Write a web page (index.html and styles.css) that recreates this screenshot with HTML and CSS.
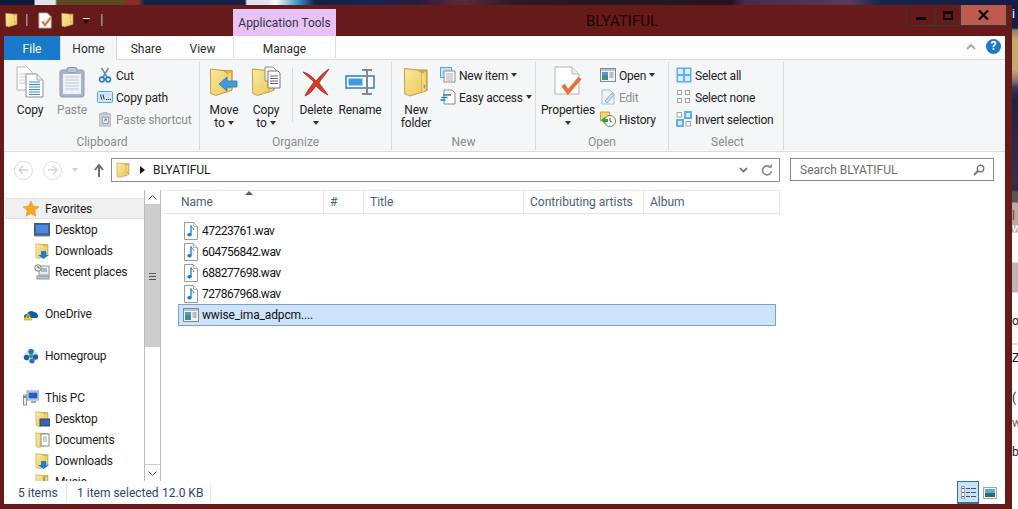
FILE: index.html
```html
<!DOCTYPE html>
<html lang="en">
<head>
<meta charset="utf-8">
<title>BLYATIFUL</title>
<link rel="stylesheet" href="styles.css">
</head>
<body>
<svg class="defs" width="0" height="0" aria-hidden="true">
  <defs>
    <linearGradient id="fy" x1="0" y1="0" x2="1" y2="1">
      <stop offset="0" stop-color="#f9e9a0"/>
      <stop offset="1" stop-color="#eec95c"/>
    </linearGradient>
  </defs>
  <symbol id="folder" viewBox="0 0 28 32">
    <path d="M9 3h17v22l-5 2H9z" fill="#d8b24e" stroke="#b8973f" stroke-width="1"/>
    <path d="M1.500 1.500l14 1.500 5 3v21l-13 4-5.500-2z" fill="url(#fy)" stroke="#b8973f" stroke-width="1"/>
    <path d="M20.500 7l4-2v20l-4 2z" fill="#f3d97c"/>
    <path d="M23 19v4" stroke="#4a9ad8" stroke-width="1.200"/>
  </symbol>
  <symbol id="note" viewBox="0 0 14 18">
    <path d="M.5.500h9l4 4v13H.5z" fill="#fff" stroke="#9a9a9a"/>
    <path d="M9.500.500v4h4" fill="#eee" stroke="#b0b0b0"/>
    <path d="M7 3.500v9" stroke="#1a7fd0" stroke-width="1.300" fill="none"/>
    <path d="M7 3.500c.5 2 2.500 2.500 3 4.500" stroke="#1a7fd0" fill="none"/>
    <ellipse cx="5.500" cy="12.800" rx="2.300" ry="1.800" fill="#1a7fd0"/>
  </symbol>
  <symbol id="appwin" viewBox="0 0 16 14">
    <rect x=".5" y=".5" width="15" height="13" fill="#f2f2f2" stroke="#7f8a8f"/>
    <rect x="1" y="1" width="14" height="2" fill="#b9c3c9"/>
    <rect x="2" y="4" width="6" height="8" fill="#3f8f7f"/>
    <rect x="2" y="4" width="6" height="3" fill="#5a93c9"/>
    <path d="M9.500 5h4M9.500 7h4M9.500 9h4" stroke="#7c8a92"/>
  </symbol>
  <symbol id="selectall" viewBox="0 0 16 16">
    <rect x=".5" y=".5" width="15" height="15" fill="#60adf2"/>
    <rect x="2" y="2" width="5" height="5" fill="#d8ecfc"/><rect x="9" y="2" width="5" height="5" fill="#d8ecfc"/>
    <rect x="2" y="9" width="5" height="5" fill="#d8ecfc"/><rect x="9" y="9" width="5" height="5" fill="#d8ecfc"/>
  </symbol>
</svg>

<div class="window">
  <header class="titlebar">
    <div class="quick">
      <svg class="q-folder"><use href="#folder"/></svg>
      <span class="q-sep"></span>
      <svg class="q-doc" viewBox="0 0 16 18">
        <path d="M1 1h9l4 4v12H1z" fill="#fff" stroke="#aaa"/>
        <path d="M4.500 10l3 4 6-8" fill="none" stroke="#e2733f" stroke-width="2.400"/>
      </svg>
      <svg class="q-folder q-folder2"><use href="#folder"/></svg>
      <span class="q-drop"></span>
      <span class="q-sep q-sep2"></span>
    </div>
    <div class="app-tools">Application Tools</div>
    <div class="title">BLYATIFUL</div>
    <div class="controls">
      <span class="ctl ctl-min"><i></i></span>
      <span class="ctl ctl-max"><i></i></span>
      <span class="ctl ctl-close">
        <svg width="11" height="10" viewBox="0 0 11 10"><path d="M1 .5l9 9M10 .5l-9 9" stroke="#0a0a0a" stroke-width="2.400"/></svg>
      </span>
    </div>
  </header>

  <div class="frame">
    <nav class="tabs">
      <span class="tab tab-file">File</span>
      <span class="tab tab-home">Home</span>
      <span class="tab tab-share">Share</span>
      <span class="tab tab-view">View</span>
      <span class="tab tab-manage">Manage</span>
      <span class="tab-tools">
        <svg width="10" height="7" viewBox="0 0 10 7"><path d="M1 6l4-4 4 4" fill="none" stroke="#a8a8a8" stroke-width="2"/></svg>
        <span class="help">?</span>
      </span>
    </nav>

    <section class="ribbon">
      <div class="group g-clip">
        <div class="group-body">
          <div class="big w42">
            <svg class="ico" width="28" height="32" viewBox="0 0 28 32">
              <path d="M1 1h10l5 5v18H1z" fill="#fff" stroke="#b5b5b5"/>
              <path d="M3 8h9M3 11h9M3 14h9M3 17h9" stroke="#c9c9c9"/>
              <path d="M10 8h11l6 6v17H10z" fill="#fff" stroke="#8f8f8f"/>
              <path d="M21 8v6h6" fill="#eee" stroke="#aaa"/>
              <path d="M13 16h11M13 18.500h11M13 21h11M13 23.500h11M13 26h11M13 28.500h11" stroke="#3a8ad6"/>
            </svg>
            <span>Copy</span>
          </div>
          <div class="big w42 dim">
            <svg class="ico" width="26" height="32" viewBox="0 0 26 32">
              <rect x="1" y="4" width="24" height="27" rx="2" fill="#a9b6c6" stroke="#8f9db0"/>
              <rect x="4" y="8" width="18" height="20" fill="#eef1f5"/>
              <path d="M6 11h14M6 14h14M6 17h14M6 20h14M6 23h14" stroke="#c3ccd8"/>
              <rect x="8" y="1.500" width="10" height="5" rx="1.500" fill="#b8c3d0" stroke="#8f9db0"/>
            </svg>
            <span>Paste</span>
          </div>
          <div class="smalls s-clip">
            <div class="small"><svg class="si" viewBox="0 0 16 18"><path d="M4 1l6 10M12 1L6 11" stroke="#7b8794" stroke-width="1.800"/><circle cx="4.500" cy="14" r="2.600" fill="none" stroke="#1a7fd0" stroke-width="1.800"/><circle cx="11.500" cy="14" r="2.600" fill="none" stroke="#1a7fd0" stroke-width="1.800"/></svg><span>Cut</span></div>
            <div class="small"><svg class="si" viewBox="0 0 16 14"><rect x=".5" y="1.500" width="15" height="11" rx="1" fill="#cfe6fb" stroke="#5aa6ea"/><path d="M3.500 4.500l1.200 5M6 4.500l1.200 5" stroke="#222" stroke-width=".9"/><path d="M9 9.500h1M11 9.500h1M13 9.500h1" stroke="#222"/></svg><span>Copy path</span></div>
            <div class="small dim"><svg class="si" viewBox="0 0 16 18"><rect x="2" y="3" width="12" height="14" fill="#c9d2dc" stroke="#a9b5c2"/><rect x="5" y="1" width="6" height="3" fill="#b3bec9"/><rect x="5" y="7" width="7" height="7" fill="#eef1f5" stroke="#8e99a6"/><path d="M6.500 12l3-3M7.500 9h2v2" stroke="#5d6975" fill="none"/></svg><span>Paste shortcut</span></div>
          </div>
        </div>
        <div class="group-label">Clipboard</div>
      </div>

      <div class="group g-org">
        <div class="group-body">
          <div class="big w40">
            <svg class="ico" width="30" height="32" viewBox="0 0 30 32">
              <use href="#folder" width="25" height="32"/>
              <path d="M10 18l8-7v4h10v6H18v4z" fill="#3f9be0" stroke="#2477b8" stroke-width=".8"/>
            </svg>
            <span>Move<br>to<i class="caret"></i></span>
          </div>
          <div class="big w40 m2">
            <svg class="ico" width="30" height="32" viewBox="0 0 30 32">
              <use href="#folder" width="25" height="32"/>
              <path d="M14 1h8l4 4v10H14z" fill="#f4f4f4" stroke="#8f8f8f"/>
              <path d="M17 5h10l2 2v15H17z" fill="#fff" stroke="#777"/>
              <path d="M19 10h8M19 12.500h8M19 15h8M19 17.500h8" stroke="#667"/>
            </svg>
            <span>Copy<br>to<i class="caret"></i></span>
          </div>
          <span class="inner-sep"></span>
          <div class="big w40">
            <svg class="ico" width="30" height="30" viewBox="0 0 30 30">
              <path d="M2 5c7 2 10 6 13 9 4-5 8-9 13-12-3 5-8 10-10 14 3 4 6 8 9 12-5-2-9-6-12-9-3 4-6 8-11 10 2-5 6-10 9-14C10 12 6 9 2 5z" fill="#d63a2b" stroke="#a92a20" stroke-width=".8"/>
            </svg>
            <span>Delete<br><i class="caret solo"></i></span>
          </div>
          <div class="big w44 m2">
            <svg class="ico" width="30" height="30" viewBox="0 0 30 30">
              <rect x="1" y="9" width="28" height="12" fill="#fff" stroke="#2a7fc8" stroke-width="1.500"/>
              <rect x="3.500" y="11.500" width="14" height="7" fill="#3f9be0"/>
              <path d="M17 3h10M17 27h10M22 3v24" stroke="#808890" stroke-width="2"/>
            </svg>
            <span>Rename</span>
          </div>
        </div>
        <div class="group-label">Organize</div>
      </div>

      <div class="group g-new">
        <div class="group-body">
          <div class="big w40">
            <svg class="ico" width="26" height="32"><use href="#folder"/></svg>
            <span>New<br>folder</span>
          </div>
          <div class="smalls">
            <div class="small"><svg class="si" viewBox="0 0 16 16"><rect x=".5" y=".5" width="11" height="10" fill="#bfe0fa" stroke="#5aa6ea"/><path d="M4 4h11v11H4z" fill="#fff" stroke="#8a8a8a"/><path d="M6 7h7M6 9h7M6 11h7M6 13h7" stroke="#aaa"/></svg><span>New item</span><i class="caret"></i></div>
            <div class="small"><svg class="si" viewBox="0 0 16 16"><path d="M4 1h8l3 3v11H4z" fill="#fff" stroke="#8a8a8a"/><path d="M3 6h8M1.500 8.500h6M.5 11h5" stroke="#1a7fd0" stroke-width="1.300"/></svg><span>Easy access</span><i class="caret"></i></div>
          </div>
        </div>
        <div class="group-label">New</div>
      </div>

      <div class="group g-open">
        <div class="group-body">
          <div class="big w56">
            <svg class="ico" width="28" height="32" viewBox="0 0 28 32">
              <path d="M1 1h17l7 7v20H1z" fill="#fff" stroke="#b0b0b0"/>
              <path d="M18 1v7h7" fill="#eee" stroke="#bbb"/>
              <path d="M9 19l5 7 12-14" fill="none" stroke="#e2733f" stroke-width="4"/>
            </svg>
            <span>Properties<br><i class="caret solo"></i></span>
          </div>
          <div class="smalls">
            <div class="small"><svg class="si" viewBox="0 0 16 14"><use href="#appwin"/></svg><span>Open</span><i class="caret"></i></div>
            <div class="small dim"><svg class="si" viewBox="0 0 16 16"><path d="M2 1h8l4 4v10H2z" fill="#eef3fa" stroke="#a9bedb"/><path d="M5 12l7-8 2 2-7 8z" fill="#cfdcee" stroke="#8faacf"/></svg><span>Edit</span></div>
            <div class="small"><svg class="si" viewBox="0 0 16 16"><path d="M.5 1h9v9h-9z" fill="#f0d470" stroke="#c8a448"/><circle cx="10" cy="10" r="5.500" fill="#fff" stroke="#777"/><path d="M10 7v3l2 1" stroke="#555" fill="none"/><path d="M1 9l4-3v2h3v3H5v2z" fill="#2ea32e"/></svg><span>History</span></div>
          </div>
        </div>
        <div class="group-label">Open</div>
      </div>

      <div class="group g-sel">
        <div class="group-body">
          <div class="smalls s-sel">
            <div class="small"><svg class="si"><use href="#selectall"/></svg><span>Select all</span></div>
            <div class="small"><svg class="si" viewBox="0 0 16 16"><g fill="#fff" stroke="#a3a3a3"><rect x="1.500" y="1.500" width="4" height="4"/><rect x="9.500" y="1.500" width="4" height="4"/><rect x="1.500" y="9.500" width="4" height="4"/><rect x="9.500" y="9.500" width="4" height="4"/></g></svg><span>Select none</span></div>
            <div class="small"><svg class="si" viewBox="0 0 16 16"><rect x="1" y="1.500" width="4.500" height="4.500" fill="#fff" stroke="#a3a3a3"/><rect x="8" y="0" width="8" height="8" fill="#60adf2"/><rect x="10" y="2" width="4" height="4" fill="#d8ecfc"/><rect x="0" y="8" width="8" height="8" fill="#60adf2"/><rect x="2" y="10" width="4" height="4" fill="#d8ecfc"/><rect x="10" y="10.500" width="4.500" height="4.500" fill="#fff" stroke="#a3a3a3"/></svg><span>Invert selection</span></div>
          </div>
        </div>
        <div class="group-label">Select</div>
      </div>
    </section>

    <div class="addressrow">
      <div class="navbtns">
        <span class="circle"><svg width="11" height="10" viewBox="0 0 11 10"><path d="M5 1L1 5l4 4M1 5h9" fill="none" stroke="#d2d2d2" stroke-width="1.300"/></svg></span>
        <span class="circle"><svg width="11" height="10" viewBox="0 0 11 10"><path d="M6 1l4 4-4 4M10 5H1" fill="none" stroke="#d2d2d2" stroke-width="1.300"/></svg></span>
        <i class="navdrop"></i>
        <svg class="up" width="10" height="13" viewBox="0 0 10 13"><path d="M1 6l4-5 4 5M5 1v12" fill="none" stroke="#6e6e6e" stroke-width="2"/></svg>
      </div>
      <div class="address">
        <svg class="addr-folder"><use href="#folder"/></svg>
        <i class="crumb"></i>
        <span class="addr-text">BLYATIFUL</span>
        <svg class="addr-chev" width="9" height="6" viewBox="0 0 9 6"><path d="M1 1l3.500 3.500L8 1" fill="none" stroke="#666" stroke-width="1.600"/></svg>
        <svg class="addr-ref" width="12" height="12" viewBox="0 0 12 12"><path d="M9.500 3.500A4.500 4.500 0 1 0 10.500 7" fill="none" stroke="#888" stroke-width="1.600"/><path d="M7 3.500h4v-3.500z" fill="#888"/></svg>
      </div>
      <div class="search">
        <span class="search-text">Search BLYATIFUL</span>
        <svg width="12" height="12" viewBox="0 0 12 12"><circle cx="7.500" cy="4.500" r="3.200" fill="none" stroke="#777" stroke-width="1.400"/><path d="M5 7L1 11" stroke="#777" stroke-width="2"/></svg>
      </div>
    </div>

    <div class="main">
      <aside class="navpane">
        <div class="nav-item top selected">
          <svg class="ni" viewBox="0 0 16 16"><path d="M8 0l2.400 5.200 5.600.6-4.200 3.800 1.200 5.600L8 12.400 3 15.200l1.200-5.600L0 5.800l5.600-.6z" fill="#f5a623" stroke="#e08a1e" stroke-width=".5"/></svg>
          <span>Favorites</span>
        </div>
        <div class="nav-item sub">
          <svg class="ni" viewBox="0 0 16 14"><rect x=".5" y=".5" width="15" height="12" fill="#2f66b8" stroke="#555"/><rect x="2" y="2" width="12" height="8" fill="#4f8ad8"/><path d="M0 13h16" stroke="#888"/></svg>
          <span>Desktop</span>
        </div>
        <div class="nav-item sub">
          <svg class="ni"><use href="#folder"/><path d="M7 8h5v4h3l-5.500 4L4 12h3z" fill="#1a7fd0"/></svg>
          <span>Downloads</span>
        </div>
        <div class="nav-item sub">
          <svg class="ni" viewBox="0 0 16 16"><rect x="5" y="2" width="10" height="9" fill="#e8edf2" stroke="#8a97a3"/><path d="M7 5h6M7 7h6" stroke="#7a8791"/><circle cx="4" cy="4" r="3.200" fill="#fff" stroke="#777"/><path d="M4 2v2h2" stroke="#555" fill="none"/><rect x="3" y="12" width="12" height="3" fill="#b9c3c9" stroke="#8a97a3"/></svg>
          <span>Recent places</span>
        </div>
        <div class="nav-item top gap">
          <svg class="ni" viewBox="0 0 16 16"><path d="M1 11c0-3 2-3 3-3 1-3 5-4 7-2 2 0 4 2 4 4s-1 2-2 2H3c-1 0-2 0-2-1z" fill="#0f5fb0"/><path d="M5 7l4 7H1z" fill="#f7d038" stroke="#b58a10" stroke-width=".6"/><path d="M5 9.500v2.500" stroke="#333" stroke-width="1"/></svg>
          <span>OneDrive</span>
        </div>
        <div class="nav-item top gap">
          <svg class="ni" viewBox="0 0 16 16"><circle cx="8" cy="8" r="6.500" fill="#cfe3f6"/><circle cx="8" cy="3.500" r="2.700" fill="#2a6fc0"/><circle cx="3.500" cy="9.500" r="2.700" fill="#2a56a8"/><circle cx="12.500" cy="9" r="2.700" fill="#2f55b0"/><circle cx="8" cy="8" r="2.200" fill="#3aa64a"/><circle cx="9" cy="13" r="2.500" fill="#2a6fc0"/></svg>
          <span>Homegroup</span>
        </div>
        <div class="nav-item top gap">
          <svg class="ni" viewBox="0 0 16 16"><rect x="4" y="1" width="12" height="9" fill="#e6ebef" stroke="#8a97a3"/><rect x="5.500" y="2.500" width="9" height="6" fill="#1f5fd0"/><path d="M8 12h5" stroke="#9aa5ad" stroke-width="2"/><rect x="0.500" y="5" width="3" height="10" fill="#e6ebef" stroke="#8a97a3"/><rect x="1" y="6" width="2" height="2" fill="#4fb04f"/></svg>
          <span>This PC</span>
        </div>
        <div class="nav-item sub">
          <svg class="ni"><use href="#folder"/><rect x="6" y="8" width="10" height="7" fill="#2f66b8" stroke="#444"/></svg>
          <span>Desktop</span>
        </div>
        <div class="nav-item sub">
          <svg class="ni"><use href="#folder"/><rect x="7" y="2" width="8" height="12" fill="#fff" stroke="#888"/><path d="M9 5h4M9 7h4M9 9h4" stroke="#8aa"/></svg>
          <span>Documents</span>
        </div>
        <div class="nav-item sub">
          <svg class="ni"><use href="#folder"/><path d="M7 8h5v4h3l-5.500 4L4 12h3z" fill="#1a7fd0"/></svg>
          <span>Downloads</span>
        </div>
        <div class="nav-item sub">
          <svg class="ni"><use href="#folder"/><path d="M10 3v10" stroke="#1a7fd0"/></svg>
          <span>Music</span>
        </div>
      </aside>

      <div class="scrollbar">
        <span class="sb-btn"><svg width="9" height="5" viewBox="0 0 9 5"><path d="M.5 4.500l4-4 4 4" fill="none" stroke="#555"/></svg></span>
        <span class="sb-thumb"><i></i></span>
        <span class="sb-track"></span>
        <span class="sb-btn sb-down"><svg width="9" height="5" viewBox="0 0 9 5"><path d="M.5.500l4 4 4-4" fill="none" stroke="#555"/></svg></span>
      </div>

      <div class="files">
        <div class="headers">
          <span class="col c-name">Name<i class="sort"></i></span>
          <span class="col c-num">#</span>
          <span class="col c-title">Title</span>
          <span class="col c-artist">Contributing artists</span>
          <span class="col c-album">Album</span>
        </div>
        <ul class="list">
          <li class="file"><svg class="fi"><use href="#note"/></svg>47223761.wav</li>
          <li class="file"><svg class="fi"><use href="#note"/></svg>604756842.wav</li>
          <li class="file"><svg class="fi"><use href="#note"/></svg>688277698.wav</li>
          <li class="file"><svg class="fi"><use href="#note"/></svg>727867968.wav</li>
          <li class="file sel"><svg class="fi fi-app"><use href="#appwin"/></svg>wwise_ima_adpcm....</li>
        </ul>
      </div>
    </div>

    <footer class="status">
      <span class="st st1">5 items</span>
      <span class="st st2">1 item selected</span>
      <span class="st st3">12.0 KB</span>
      <span class="views">
        <span class="view active"><svg width="15" height="13" viewBox="0 0 15 13"><rect x=".5" y=".5" width="3" height="12" fill="#fff" stroke="#9aa7b3"/><path d="M1 2.500h2" stroke="#555"/><path d="M1 6.500h2" stroke="#c33"/><path d="M1 10.500h2" stroke="#555"/><path d="M5 2.500h4M10 2.500h5M5 6.500h4M10 6.500h5M5 10.500h4M10 10.500h5" stroke="#44576b"/></svg></span>
        <span class="view"><svg width="14" height="12" viewBox="0 0 14 12"><rect x=".5" y=".5" width="13" height="11" fill="#fff" stroke="#9aa7b3"/><rect x="2" y="2" width="10" height="4" fill="#5ba6e0"/><rect x="2" y="6" width="10" height="4" fill="#2f6f5a"/></svg></span>
      </span>
    </footer>
  </div>
</div>

<div class="strip">
  <span class="sl l1">i</span><span class="sl l2">l</span><span class="sl l3">w</span><span class="sl l4">or</span><span class="sl l5">Z</span><span class="sl l6">(</span><span class="sl l7">w</span><span class="sl l8">b</span>
</div>
</body>
</html>
```
FILE: styles.css
```css
* { box-sizing: border-box; }
html, body { margin: 0; height: 100%; }
body {
  position: relative;
  width: 1018px;
  height: 509px;
  overflow: hidden;
  font: 12px/15px Roboto, "Noto Sans", sans-serif;
  color: #1c1c1c;
  background: linear-gradient(90deg, #0e1a3c 0, #0e1a3c 34px, #dfe4ec 35px, #dfe4ec 55px, #5b4a22 57px, #5b4a22 122px, #8a2c2c 128px, #8a2c2c 138px, #142048 145px, #142048 245px, #dfe4ec 247px, #dfe4ec 268px, #fff 275px, #2f8ac0 300px, #142048 315px, #1a2450 375px, #2c1b3c 420px, #5a2a3a 460px, #2a1a2a 515px, #231420 730px, #4a2a4c 745px, #5a3a58 850px, #18244c 880px, #141e44 1018px);
}
.defs { position: absolute; }

.window {
  position: absolute;
  left: 0;
  top: 5px;
  width: 1012px;
  height: 504px;
  background: #661a1a;
  display: flex;
  flex-direction: column;
}

/* title bar */
.titlebar { display: flex; height: 31px; flex: none; }
.quick { width: 233px; display: flex; align-items: flex-start; padding: 7px 0 0 5px; }
.q-folder { width: 13px; height: 16px; }
.q-folder2 { margin-left: 8px; }
.q-doc { width: 15px; height: 17px; margin-left: 10px; }
.q-sep { width: 2px; height: 12px; margin: 2px 0 0 8px; background: #8a5a5a; border-left: 1px solid #a98080; }
.q-sep2 { margin-left: 11px; }
.q-drop { width: 7px; height: 6px; margin: 6px 0 0 9px; border-top: 1px solid #ddd; }
.q-drop::after { content: ""; display: block; width: 0; margin: 1px 0 0 0; border: 3.500px solid transparent; border-top: 4px solid #111; border-bottom: 0; }
.app-tools {
  width: 103px;
  height: 27px;
  margin-top: 4px;
  background: #e8c2f7;
  color: #2e3440;
  text-align: center;
  line-height: 29px;
  white-space: nowrap;
}
.title { flex: 1; text-align: center; font-size: 15px; line-height: 32px; padding-left: 2px; color: #210505; }
.controls { display: flex; height: 21px; margin-right: 5px; }
.ctl { display: flex; align-items: center; justify-content: center; border: 1px solid #2d3a3e; border-top: 0; }
.ctl + .ctl { border-left: 0; }
.ctl-min { width: 29px; }
.ctl-max { width: 26px; }
.ctl-close { width: 46px; background: #c0594e; }
.ctl-min i { display: block; width: 10px; height: 3px; background: #0a0a0a; margin-top: 7px; }
.ctl-max i { display: block; width: 10px; height: 9px; border: 2px solid #0a0a0a; border-top-width: 3px; }

/* frame */
.frame {
  flex: none;
  width: 1001px;
  height: 468px;
  margin-left: 4px;
  background: #fff;
  display: flex;
  flex-direction: column;
}

.tabs { display: flex; height: 24px; flex: none; border-bottom: 1px solid #dadbdc; color: #2b2b2b; }
.tab { text-align: center; line-height: 26px; height: 24px; }
.tab-file { width: 56px; background: #1979ca; color: #fff; }
.tab-home { width: 57px; background: #f5f6f7; border: 1px solid #dadbdc; border-bottom: 0; border-top: 0; }
.tab-share { width: 58px; }
.tab-view { width: 55px; margin-right: 3px; }
.tab-manage { width: 103px; border: 1px solid #e0e0e0; border-width: 0 1px; }
.tab-tools { margin-left: auto; display: flex; align-items: center; gap: 10px; padding: 0 4px 2px 0; }
.help { width: 15px; height: 15px; border-radius: 50%; background: #1979ca; color: #fff; font-weight: 700; font-size: 12px; line-height: 15px; text-align: center; }

.ribbon { display: flex; height: 92px; flex: none; background: #f5f6f7; border-bottom: 1px solid #dadbdc; }
.group { display: flex; flex-direction: column; height: 88px; margin-top: 2px; border-right: 1px solid #dadbdc; }
.group-body { display: flex; height: 74px; padding-top: 2px; }
.group-label { text-align: center; color: #8b8b8b; line-height: 15px; }
.g-clip { width: 196px; padding-left: 5px; }
.g-org { width: 192px; padding-left: 4px; }
.g-new { width: 144px; padding-left: 4px; }
.g-open { width: 133px; padding-left: 4px; }
.g-sel { width: 115px; padding-left: 7px; }
.g-clip .group-label, .g-org .group-label, .g-new .group-label, .g-open .group-label, .g-sel .group-label { margin-left: -4px; }

.big { display: flex; flex-direction: column; align-items: center; text-align: center; line-height: 13px; letter-spacing: -.1px; color: #222; }
.big .ico { height: 36px; padding: 2px 0; margin-bottom: 4px; flex: none; }
.w40 { width: 40px; }
.w42 { width: 42px; }
.w44 { width: 44px; }
.w56 { width: 56px; }
.m2 { margin-left: 2px; }
.dim { color: #8d8d8d; }
.inner-sep { width: 1px; height: 54px; background: #dadbdc; margin: 4px 3px 0 6px; }
.caret { display: inline-block; margin-left: 3px; vertical-align: 2px; border: 3px solid transparent; border-top: 4px solid #333; border-bottom: 0; }
.caret.solo { margin-left: 0; }

.smalls { display: flex; flex-direction: column; margin-left: 4px; }
.s-sel { margin-left: 0; }
.small { display: flex; align-items: center; height: 22px; gap: 3px; white-space: nowrap; color: #222; }
.small span { padding-top: 2px; letter-spacing: -.2px; }
.small .caret { margin-left: 0; vertical-align: baseline; }
.small.dim { color: #8d8d8d; }
.si { width: 16px; height: 16px; flex: none; }

/* address */
.addressrow { display: flex; height: 38px; flex: none; padding: 6px 0 0 0; }
.navbtns { width: 107px; display: flex; align-items: center; height: 24px; padding-left: 10px; }
.circle { width: 19px; height: 19px; border: 1px solid #dcdcdc; border-radius: 50%; display: flex; align-items: center; justify-content: center; margin-right: 10px; }
.navdrop { border: 3px solid transparent; border-top: 4px solid #d0d0d0; border-bottom: 0; margin-left: 0; }
.up { margin-left: 16px; }
.address { width: 669px; height: 24px; border: 1px solid #8c8c8c; display: flex; align-items: center; padding: 0 6px 0 4px; }
.addr-folder { width: 14px; height: 18px; }
.crumb { margin-left: 10px; border: 4px solid transparent; border-left: 5px solid #111; border-right: 0; }
.addr-text { margin-left: 8px; flex: 1; padding-top: 1px; color: #1c1c1c; }
.addr-chev { margin-right: 13px; }
.search { width: 204px; height: 23px; margin-left: 10px; border: 1px solid #8c8c8c; display: flex; align-items: center; justify-content: space-between; padding: 0 8px 0 9px; color: #6d6d6d; }
.search-text { padding-top: 2px; }

/* main */
.main { display: flex; flex: 1; min-height: 0; overflow: hidden; }
.navpane { width: 140px; flex: none; padding-top: 8px; overflow: hidden; }
.nav-item { display: flex; align-items: center; height: 21px; white-space: nowrap; flex: none; }
.nav-item span { padding-top: 2px; letter-spacing: -.2px; }
.nav-item.top { padding-left: 19px; }
.nav-item.sub { padding-left: 30px; }
.nav-item.gap { margin-top: 21px; }
.nav-item.selected { background: #f0f0f0; border: 1px solid #e2e2e2; border-width: 1px 0; margin-left: 1px; padding-left: 18px; }
.ni { width: 16px; height: 16px; flex: none; margin-right: 5px; }
.top .ni { margin-right: 6px; }

.scrollbar { width: 17px; flex: none; display: flex; flex-direction: column; border: 1px solid #bcbcbc; border-width: 0 1px; }
.sb-btn { height: 15px; flex: none; display: flex; align-items: center; justify-content: center; border-bottom: 1px solid #c9c9c9; }
.sb-down { height: 17px; border-bottom: 0; border-top: 1px solid #c9c9c9; }
.sb-thumb { height: 142px; flex: none; background: #cdcdcd; display: flex; align-items: center; justify-content: center; }
.sb-thumb i { width: 7px; height: 7px; border-top: 1px solid #555; border-bottom: 1px solid #555; }
.sb-thumb i::after { content: ""; display: block; height: 1px; margin-top: 2px; background: #555; }
.sb-track { flex: 1; }

.files { flex: 1; margin-left: 3px; min-width: 0; }
.headers { display: flex; width: 616px; height: 24px; border-top: 1px solid #e5e5e5; border-bottom: 1px solid #e5e5e5; border-right: 1px solid #e5e5e5; color: #4c607a; line-height: 22px; }
.col { padding-left: 6px; border-right: 1px solid #e5e5e5; position: relative; white-space: nowrap; }
.col:last-child { border-right: 0; }
.c-name { width: 160px; padding-left: 17px; }
.c-num { width: 40px; }
.c-title { width: 160px; }
.c-artist { width: 120px; }
.c-album { width: 135px; }
.sort { position: absolute; left: 81px; top: 0; border: 4px solid transparent; border-top: 0; border-bottom: 4px solid #4c607a; }

.list { list-style: none; margin: 6px 0 0; padding: 0 0 0 14px; }
.file { display: flex; align-items: center; height: 21px; width: 598px; padding: 1px 0 0 6px; color: #111; white-space: nowrap; letter-spacing: -.5px; }
.fi { width: 14px; height: 18px; margin-right: 4px; flex: none; }
.file.sel { height: 22px; background: #cce3fb; border: 1px solid #7da2ce; padding: 0 0 0 5px; letter-spacing: -.15px; }
.fi-app { width: 16px; height: 14px; margin-right: 3px; margin-left: -1px; }

.status { height: 23px; flex: none; display: flex; align-items: center; color: #2c4570; }
.st { white-space: nowrap; padding-top: 2px; }
.st1 { width: 49px; margin-left: 14px; margin-right: 10px; border-right: 1px solid #e5e5e5; }
.st2 { width: 85px; }
.st3 { width: 49px; border-right: 1px solid #e5e5e5; }
.views { margin-left: auto; display: flex; align-items: center; height: 23px; margin-right: 8px; gap: 4px; }
.view { width: 22px; height: 23px; display: flex; align-items: center; justify-content: center; }
.view.active { background: #c5e3f8; border: 1px solid #3c6e91; border-bottom-width: 2px; }
.view:last-child { width: 14px; }

/* desktop behind the window's right edge */
.strip {
  position: absolute;
  left: 1012px;
  top: 0;
  width: 6px;
  height: 509px;
  overflow: hidden;
  background: linear-gradient(180deg, #141e44 0, #141e44 28px, #8d8070 30px, #c9a970 40px, #c9a970 70px, #7a6a6a 82px, #3b3252 88px, #1c2244 100px, #33304a 180px, #2a2a3a 190px, #5a5358 192px, #5a5358 202px, #b9aaa8 203px, #b9aaa8 232px, #fff 233px, #fff 262px, #c0b4b4 263px, #c0b4b4 292px, #fff 293px, #fff 343px, #bbb 344px, #fff 345px, #fff 509px);
}
.sl { position: absolute; left: 0; font-size: 12px; line-height: 14px; color: #101830; }
.l1 { top: 7px; color: #fff; }
.l2 { top: 209px; color: #7a3a10; }
.l3 { top: 221px; color: #fff; }
.l4 { top: 314px; }
.l5 { top: 351px; }
.l6 { top: 391px; }
.l7 { top: 416px; color: #666; }
.l8 { top: 445px; }
```
